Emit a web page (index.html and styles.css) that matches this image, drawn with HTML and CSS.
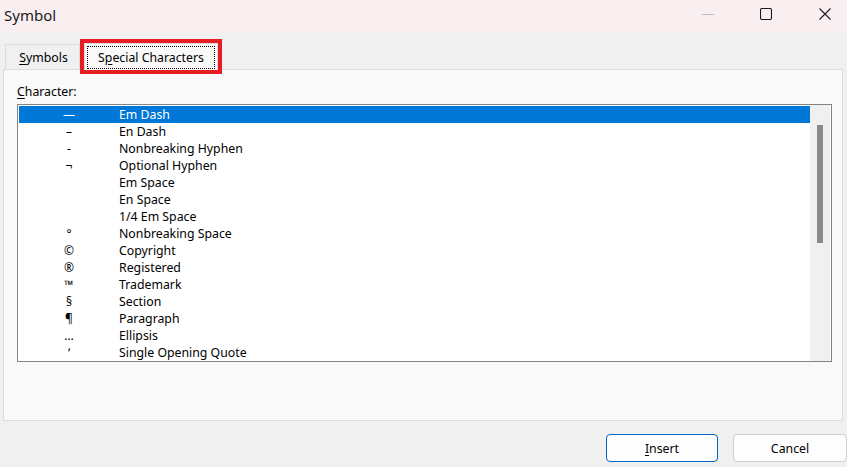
FILE: index.html
```html
<!DOCTYPE html>
<html lang="en">
<head>
<meta charset="UTF-8">
<title>Symbol</title>
<link rel="stylesheet" href="styles.css">
</head>
<body>

<div class="titlebar">
  <span class="title">Symbol</span>
  <div class="caption">
    <svg class="cap min" width="12" height="12" viewBox="0 0 12 12"><line x1="0" y1="6.5" x2="12" y2="6.5" stroke="#bdbdbd" stroke-width="1"/></svg>
    <svg class="cap" width="12" height="12" viewBox="0 0 12 12"><rect x="0.5" y="0.5" width="11" height="11" rx="1.5" fill="none" stroke="#1b1b1b" stroke-width="1.1"/></svg>
    <svg class="cap" width="12" height="12" viewBox="0 0 12 12"><path d="M0.5 0.5 L11.5 11.5 M11.5 0.5 L0.5 11.5" stroke="#1b1b1b" stroke-width="1.1"/></svg>
  </div>
</div>

<div class="main">
  <div class="tabs">
    <div class="tab"><u>S</u>ymbols</div>
    <div class="tab active"><span class="focus">S<u>p</u>ecial Characters</span></div>
  </div>

  <div class="panel">
    <div class="label"><u>C</u>haracter:</div>
    <div class="listbox">
      <div class="rows" id="rows"></div>
      <div class="scrollbar"><div class="thumb"></div></div>
    </div>
  </div>

  <div class="buttons">
    <button class="btn default"><u>I</u>nsert</button>
    <button class="btn">Cancel</button>
  </div>
</div>

<script>
  const items = [
    ['\u2014', 'Em Dash'],
    ['\u2013', 'En Dash'],
    ['-', 'Nonbreaking Hyphen'],
    ['\u00ac', 'Optional Hyphen'],
    ['', 'Em Space'],
    ['', 'En Space'],
    ['', '1/4 Em Space'],
    ['\u00b0', 'Nonbreaking Space'],
    ['\u00a9', 'Copyright'],
    ['\u00ae', 'Registered'],
    ['\u2122', 'Trademark'],
    ['\u00a7', 'Section'],
    ['\u00b6', 'Paragraph'],
    ['\u2026', 'Ellipsis'],
    ['\u2018', 'Single Opening Quote']
  ];
  const rows = document.getElementById('rows');
  items.forEach((item, i) => {
    const row = document.createElement('div');
    row.className = i === 0 ? 'row selected' : 'row';
    const sym = document.createElement('span');
    sym.className = 'sym';
    sym.textContent = item[0];
    const name = document.createElement('span');
    name.className = 'name';
    name.textContent = item[1];
    row.appendChild(sym);
    row.appendChild(name);
    rows.appendChild(row);
  });
</script>
</body>
</html>
```

FILE: styles.css
```css
* {
  box-sizing: border-box;
}
body {
  margin: 0;
  width: 847px;
  height: 467px;
  overflow: hidden;
  background-color: #f0f0f0;
  font-family: 'Noto Sans', 'Open Sans', sans-serif;
  font-size: 12.3px;
  color: #000;
}
u {
  text-decoration-thickness: 1px;
  text-underline-offset: 2px;
}
.titlebar {
  height: 33px;
  background-color: #f9eff0;
  display: flex;
  align-items: center;
}
.title {
  padding-left: 4px;
  font-size: 15px;
  color: #1b1b1b;
  margin-top: -3px;
}
.caption {
  margin-left: auto;
  display: flex;
  gap: 46px;
  padding-right: 16px;
  margin-top: -5px;
}
.caption svg + svg + svg {
  margin-left: 1px;
}
.main {
  padding: 0 4px 0 3px;
}
.tabs {
  margin-top: 10px;
  height: 26px;
  display: flex;
  align-items: flex-end;
  padding-left: 2px;
}
.tab {
  height: 25px;
  width: 75px;
  display: flex;
  align-items: center;
  justify-content: center;
  border: 1px solid #dcdcdc;
  border-bottom: none;
  background-color: #f0f0f0;
  padding: 1px 0 0 2px;
}
.tab.active {
  width: 134px;
  height: 27px;
  margin-left: 4px;
  margin-bottom: -1px;
  position: relative;
  z-index: 1;
  background-color: #f9f9f9;
  outline: 4px solid #e81c24;
  padding: 0;
}
.focus {
  border: 1px dotted #000;
  display: flex;
  align-items: center;
  justify-content: center;
  width: 128px;
  height: 23px;
  margin-top: 1px;
}
.panel {
  height: 352px;
  background-color: #f9f9f9;
  border: 1px solid #dcdcdc;
  padding: 13px 10px 0 13px;
}
.label {
  height: 17px;
  line-height: 17px;
  margin-bottom: 4px;
}
.listbox {
  height: 258px;
  border: 1px solid #838383;
  background-color: #fff;
  display: flex;
}
.rows {
  flex: 1;
  padding: 1px 0 0 1px;
}
.row {
  height: 17px;
  display: flex;
  align-items: center;
}
.row.selected {
  background-color: #0078d7;
  color: #fff;
}
.sym {
  width: 100px;
  text-align: center;
  font-size: 12px;
}
.scrollbar {
  width: 20px;
  margin-right: 1px;
  background-color: #f0f0f0;
  padding: 20px 0 0 7px;
}
.thumb {
  width: 6px;
  height: 118px;
  background-color: #8a8a8a;
}
.buttons {
  display: flex;
  justify-content: flex-end;
  gap: 15px;
  margin-top: 13px;
  margin-right: -4px;
}
.btn {
  width: 112px;
  height: 28px;
  font-family: inherit;
  font-size: 12.3px;
  color: #000;
  background-color: #fdfdfd;
  border: 1px solid #d0d0d0;
  border-radius: 4px;
  padding: 0;
}
.btn.default {
  border-color: #0067c0;
}
.btn + .btn {
  width: 114px;
}
```
